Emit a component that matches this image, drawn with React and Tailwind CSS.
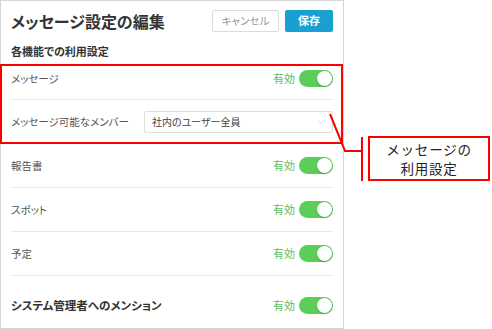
import { ChevronDown } from 'lucide-react';

const jp = { fontFamily: '"Noto Sans CJK JP", "Noto Sans", sans-serif' };

function Toggle() {
  return (
    <div className="flex items-center gap-[4px]">
      <span className="text-[11px] text-[#5cbf5a]">有効</span>
      <div className="w-[34px] h-[17px] rounded-full bg-[#5ccd59] flex items-center justify-end pr-[1px]">
        <div className="w-[15px] h-[15px] rounded-full bg-white shadow-[0_1px_2px_rgba(0,0,0,0.25)]" />
      </div>
    </div>
  );
}

function Row({ label, first, last, bold }) {
  return (
    <div
      className={
        'flex items-center justify-between ' +
        (first ? 'h-[42px] ' : last ? 'h-[53px] pt-[6px] ' : 'h-[44px] ') +
        (last ? '' : 'border-b border-[#e8e8e8]')
      }
    >
      <span className={bold ? 'text-[11.5px] font-bold text-[#333]' : 'text-[10.5px] text-[#555]'}>{label}</span>
      <Toggle />
    </div>
  );
}

export default function App() {
  return (
    <div className="relative w-[492px] h-[329px] bg-white overflow-hidden" style={jp}>
      <div className="w-[344px] h-[329px] border border-[#d6d6d6] [font-feature-settings:'palt']">
        <div className="h-[39px] px-[10px] flex items-center justify-between">
          <h1 className="text-[16px] font-bold text-[#333]">メッセージ設定の編集</h1>
          <div className="flex gap-[6px]">
            <button className="w-[67px] h-[22px] border border-[#dcdcdc] rounded-[2px] bg-white text-[10.5px] text-[#999]">
              キャンセル
            </button>
            <button className="w-[48px] h-[22px] rounded-[2px] bg-[#1a9fd1] text-[11px] font-bold text-white">
              保存
            </button>
          </div>
        </div>
        <div className="mt-[4px] h-[14px] leading-[14px] px-[10px] text-[11px] font-bold text-[#333]">
          各機能での利用設定
        </div>
        <div className="px-[10px]">
          <Row label="メッセージ" first />
          <div className="h-[44px] flex items-center justify-between border-b border-[#e8e8e8]">
            <span className="text-[10.5px] text-[#555]">メッセージ可能なメンバー</span>
            <div className="w-[189px] h-[22px] border border-[#dedede] rounded-[2px] flex items-center justify-between pl-[7px] pr-[5px]">
              <span className="text-[10px] text-[#444]">社内のユーザー全員</span>
              <ChevronDown size={12} strokeWidth={1.25} className="text-[#c4c4c4]" />
            </div>
          </div>
          <Row label="報告書" />
          <Row label="スポット" />
          <Row label="予定" />
          <Row label="システム管理者へのメンション" last bold />
        </div>
      </div>

      <div className="absolute left-0 top-[64px] w-[343px] h-[80px] border-2 border-[#ff0000]" />

      <svg className="absolute inset-0 pointer-events-none" width="492" height="329">
        <polyline points="330,114 345,151 362,151" fill="none" stroke="#ff0000" strokeWidth="2" />
        <line x1="362" y1="137" x2="362" y2="181" stroke="#ff0000" strokeWidth="2" />
      </svg>

      <div className="absolute left-[368px] top-[136px] w-[122px] h-[45px] border-2 border-[#ff0000] bg-white flex flex-col items-center justify-center text-[13.5px] leading-[19px] tracking-[0.8px] text-[#222]">
        <span>メッセージの</span>
        <span>利用設定</span>
      </div>
    </div>
  );
}
